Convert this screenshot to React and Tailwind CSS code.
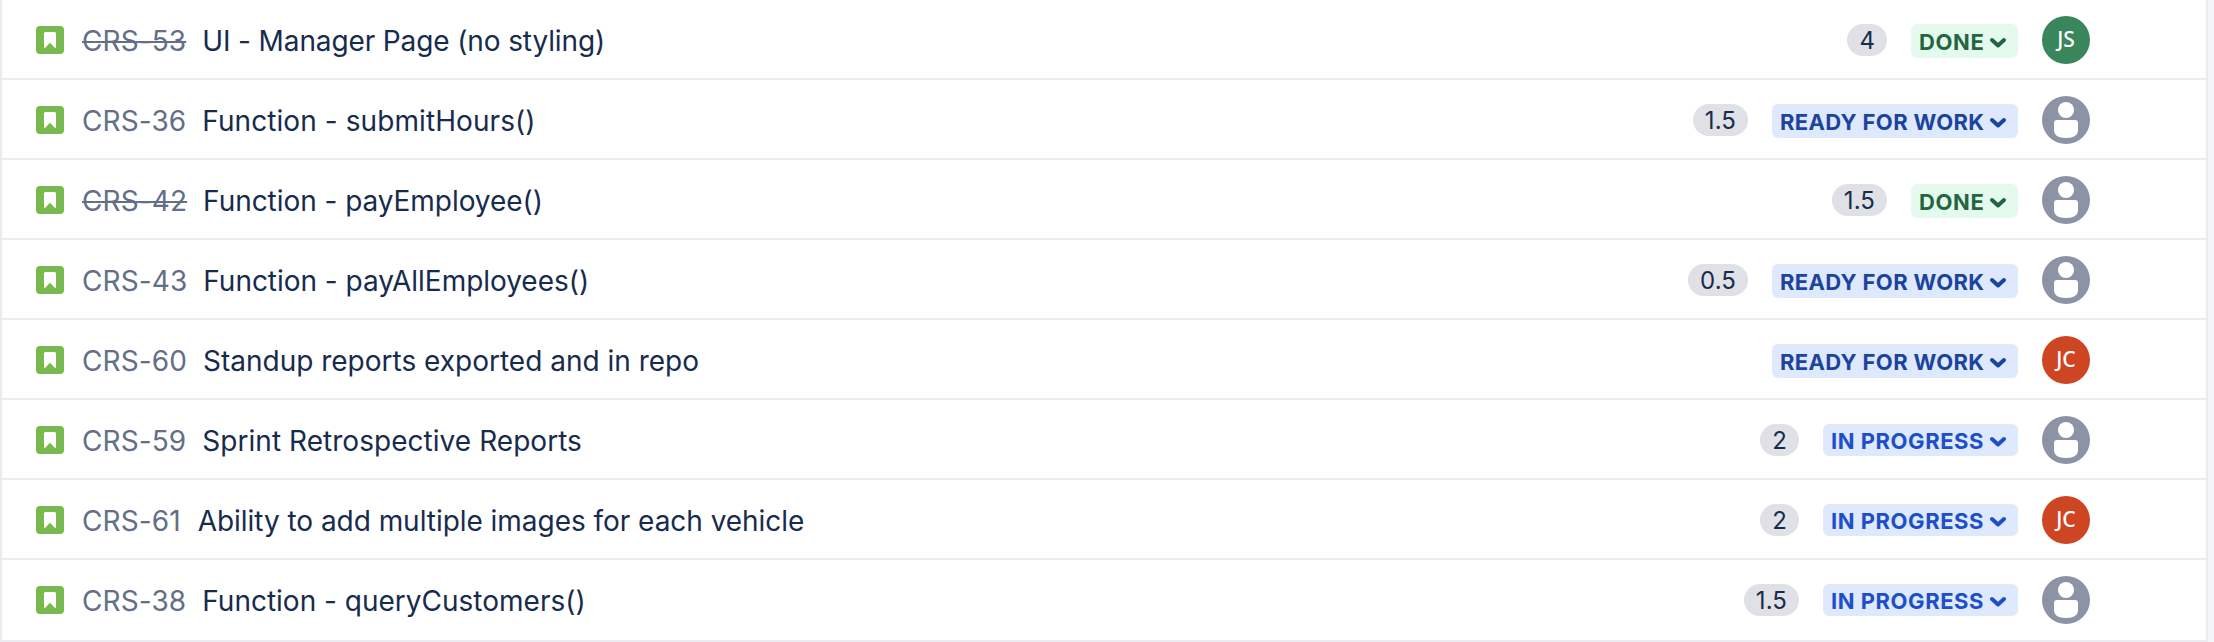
import React from "react";

const issues = [
  { id: "CRS-53", title: "UI - Manager Page (no styling)", tracking: "tracking-[-0.12px]", points: "4", status: "done", who: "JS" },
  { id: "CRS-36", title: "Function - submitHours()", tracking: "tracking-[0.08px]", points: "1.5", status: "ready" },
  { id: "CRS-42", title: "Function - payEmployee()", tracking: "tracking-[-0.05px]", points: "1.5", status: "done" },
  { id: "CRS-43", title: "Function - payAllEmployees()", tracking: "tracking-[-0.03px]", points: "0.5", status: "ready" },
  { id: "CRS-60", title: "Standup reports exported and in repo", tracking: "tracking-[0px]", status: "ready", who: "JC" },
  { id: "CRS-59", title: "Sprint Retrospective Reports", tracking: "tracking-[0.04px]", points: "2", status: "progress" },
  { id: "CRS-61", title: "Ability to add multiple images for each vehicle", tracking: "pl-px tracking-[-0.04px]", points: "2", status: "progress", who: "JC" },
  { id: "CRS-38", title: "Function - queryCustomers()", tracking: "tracking-[0px]", points: "1.5", status: "progress" },
];

const statuses = {
  done: { label: "DONE", box: "h-[34px] w-[107px] mt-[2px] tracking-[0.6px] bg-[#e5faef] text-[#24663f]" },
  ready: { label: "READY FOR WORK", box: "h-[34px] w-[246px] mt-[2px] tracking-[0.35px] bg-[#dfe9fd] text-[#1b449f]" },
  progress: { label: "IN PROGRESS", box: "h-8 w-[195px] tracking-[0.55px] bg-[#dfe9fd] text-[#1d50c8]" },
};

function StoryIcon() {
  return (
    <svg className="size-7 shrink-0" viewBox="0 0 28 28">
      <rect width="28" height="28" rx="4" fill="#77b94f" />
      <path d="M8 7.5A1.5 1.5 0 0 1 9.500 6H18.500A1.5 1.5 0 0 1 20 7.500V21.500L19 22L14 16.800L9 22L8 21.500Z" fill="#fff" />
    </svg>
  );
}

function Status({ kind }) {
  const { label, box } = statuses[kind];
  return (
    <button className={`flex items-center justify-between rounded-[6px] pl-2 pr-3 ${box}`}>
      <span className="pt-0.5 text-[22px] leading-8 font-bold whitespace-nowrap">{label}</span>
      <svg className="w-4 h-4" viewBox="0 0 16 16" fill="none" stroke="currentColor" strokeWidth="4" strokeLinecap="round" strokeLinejoin="round">
        <path d="M2 7L8 12.500L14 7" />
      </svg>
    </button>
  );
}

function Avatar({ who }) {
  if (!who) {
    return (
      <svg className="size-12 shrink-0" viewBox="0 0 48 48">
        <circle cx="24" cy="24" r="24" fill="#8c93a4" />
        <circle cx="24" cy="14" r="8" fill="#fff" />
        <path d="M12 27A3 3 0 0 1 15 24H33A3 3 0 0 1 36 27V34C36 39 32 42 24 42S12 39 12 34Z" fill="#fff" />
      </svg>
    );
  }
  const color = who === "JS" ? "bg-[#39855c]" : "bg-[#cd4522]";
  return (
    <div className={`flex size-12 shrink-0 items-center justify-center rounded-full font-['Noto_Sans',sans-serif] text-[21px] font-medium text-white ${color}`}>
      {who}
    </div>
  );
}

function Row({ issue, last }) {
  return (
    <li className={`flex items-center border-b-2 border-[#ebebf0] pl-[34px] pr-[116px] ${last ? "h-[82px] pb-0.5" : "h-20"}`}>
      <div className="flex flex-1 items-center pt-0.5">
        <StoryIcon />
        <span className={`ml-[18px] pt-0.5 text-[28px] leading-8 tracking-[0.1px] text-[#626f86] ${issue.status === "done" ? "line-through decoration-2" : ""}`}>{issue.id}</span>
        <span className={`ml-4 pt-0.5 text-[28px] leading-8 text-[#172b4d] ${issue.tracking}`}>{issue.title}</span>
      </div>
      <div className="flex items-center gap-6 pt-0.5">
        {issue.points && (
          <span className="flex h-8 items-center rounded-full bg-[#dfe1e6] px-3 pt-0.5 text-2xl tracking-[0.1px] text-[#172b4d]">{issue.points}</span>
        )}
        <Status kind={issue.status} />
        <Avatar who={issue.who} />
      </div>
    </li>
  );
}

export default function App() {
  return (
    <main className="h-[642px] w-[2214px] overflow-hidden bg-[#f4f5f7] font-[Inter,sans-serif]">
      <ul className="w-[2208px] border-x-2 border-[#ebebf0] bg-white">
        {issues.map((issue, i) => (
          <Row key={issue.id} issue={issue} last={i === issues.length - 1} />
        ))}
      </ul>
    </main>
  );
}
